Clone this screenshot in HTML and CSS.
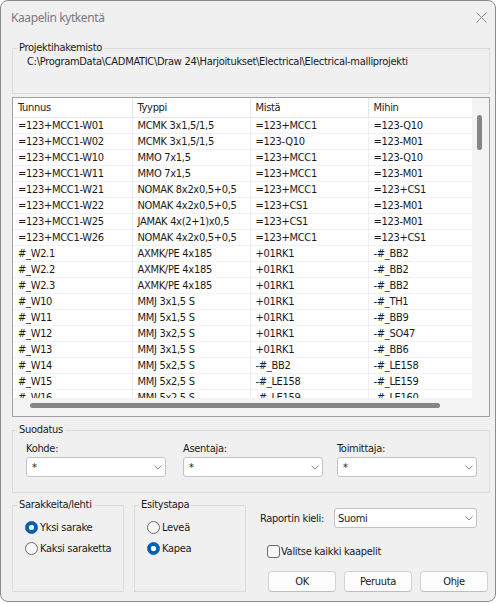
FILE: index.html
```html
<!DOCTYPE html>
<html>

<head>
  <title>Kaapelin kytkentä</title>
  <link rel="stylesheet" href="styles.css">
</head>

<body>
  <div class="window">
    <div class="titlebar">
      <span class="title">Kaapelin kytkentä</span>
      <svg class="close" width="11" height="11" viewBox="0 0 11 11">
        <path d="M0.5 0.5 L10.5 10.5 M10.5 0.5 L0.5 10.5" stroke="#8a8a8a" stroke-width="1" fill="none" />
      </svg>
    </div>

    <div class="content">
      <fieldset class="group project">
        <legend>Projektihakemisto</legend>
        <div class="path">C:\ProgramData\CADMATIC\Draw 24\Harjoitukset\Electrical\Electrical-malliprojekti</div>
      </fieldset>

      <div class="list">
        <div class="list-view">
          <table>
            <colgroup>
              <col class="c1"><col class="c2"><col class="c2"><col class="c2">
            </colgroup>
            <thead>
              <tr><th>Tunnus</th><th>Tyyppi</th><th>Mistä</th><th>Mihin</th></tr>
            </thead>
            <tbody>
              <tr><td>=123+MCC1-W01</td><td>MCMK 3x1,5/1,5</td><td>=123+MCC1</td><td>=123-Q10</td></tr>
              <tr><td>=123+MCC1-W02</td><td>MCMK 3x1,5/1,5</td><td>=123-Q10</td><td>=123-M01</td></tr>
              <tr><td>=123+MCC1-W10</td><td>MMO 7x1,5</td><td>=123+MCC1</td><td>=123-Q10</td></tr>
              <tr><td>=123+MCC1-W11</td><td>MMO 7x1,5</td><td>=123+MCC1</td><td>=123-M01</td></tr>
              <tr><td>=123+MCC1-W21</td><td>NOMAK 8x2x0,5+0,5</td><td>=123+MCC1</td><td>=123+CS1</td></tr>
              <tr><td>=123+MCC1-W22</td><td>NOMAK 4x2x0,5+0,5</td><td>=123+CS1</td><td>=123-M01</td></tr>
              <tr><td>=123+MCC1-W25</td><td>JAMAK 4x(2+1)x0,5</td><td>=123+CS1</td><td>=123-M01</td></tr>
              <tr><td>=123+MCC1-W26</td><td>NOMAK 4x2x0,5+0,5</td><td>=123+MCC1</td><td>=123+CS1</td></tr>
              <tr><td>#_W2.1</td><td>AXMK/PE 4x185</td><td>+01RK1</td><td>-#_BB2</td></tr>
              <tr><td>#_W2.2</td><td>AXMK/PE 4x185</td><td>+01RK1</td><td>-#_BB2</td></tr>
              <tr><td>#_W2.3</td><td>AXMK/PE 4x185</td><td>+01RK1</td><td>-#_BB2</td></tr>
              <tr><td>#_W10</td><td>MMJ 3x1,5 S</td><td>+01RK1</td><td>-#_TH1</td></tr>
              <tr><td>#_W11</td><td>MMJ 5x1,5 S</td><td>+01RK1</td><td>-#_BB9</td></tr>
              <tr><td>#_W12</td><td>MMJ 3x2,5 S</td><td>+01RK1</td><td>-#_SO47</td></tr>
              <tr><td>#_W13</td><td>MMJ 3x1,5 S</td><td>+01RK1</td><td>-#_BB6</td></tr>
              <tr><td>#_W14</td><td>MMJ 5x2,5 S</td><td>-#_BB2</td><td>-#_LE158</td></tr>
              <tr><td>#_W15</td><td>MMJ 5x2,5 S</td><td>-#_LE158</td><td>-#_LE159</td></tr>
              <tr><td>#_W16</td><td>MMJ 5x2,5 S</td><td>-#_LE159</td><td>-#_LE160</td></tr>
            </tbody>
          </table>
        </div>
        <div class="vscroll"><div class="thumb"></div></div>
        <div class="hscroll"><div class="thumb"></div></div>
        <div class="corner"></div>
      </div>

      <fieldset class="group filter">
        <legend>Suodatus</legend>
        <div class="filter-row">
          <div class="field">
            <label>Kohde:</label>
            <div class="combo"><span>*</span><svg class="chev" width="8" height="5" viewBox="0 0 8 5"><path d="M0.5 0.5 L4 4 L7.5 0.5" stroke="#8a8a8a" fill="none" /></svg></div>
          </div>
          <div class="field">
            <label>Asentaja:</label>
            <div class="combo"><span>*</span><svg class="chev" width="8" height="5" viewBox="0 0 8 5"><path d="M0.5 0.5 L4 4 L7.5 0.5" stroke="#8a8a8a" fill="none" /></svg></div>
          </div>
          <div class="field">
            <label>Toimittaja:</label>
            <div class="combo"><span>*</span><svg class="chev" width="8" height="5" viewBox="0 0 8 5"><path d="M0.5 0.5 L4 4 L7.5 0.5" stroke="#8a8a8a" fill="none" /></svg></div>
          </div>
        </div>
      </fieldset>

      <div class="bottom">
        <fieldset class="group small">
          <legend>Sarakkeita/lehti</legend>
          <label class="radio checked"><span class="dot"></span>Yksi sarake</label>
          <label class="radio"><span class="dot"></span>Kaksi saraketta</label>
        </fieldset>
        <fieldset class="group small second">
          <legend>Esitystapa</legend>
          <label class="radio"><span class="dot"></span>Leveä</label>
          <label class="radio checked"><span class="dot"></span>Kapea</label>
        </fieldset>

        <div class="options">
          <div class="lang">
            <span class="lang-label">Raportin kieli:</span>
            <div class="combo wide"><span>Suomi</span><svg class="chev" width="8" height="5" viewBox="0 0 8 5"><path d="M0.5 0.5 L4 4 L7.5 0.5" stroke="#8a8a8a" fill="none" /></svg></div>
          </div>
          <label class="check"><span class="box"></span>Valitse kaikki kaapelit</label>
          <div class="buttons">
            <button>OK</button>
            <button>Peruuta</button>
            <button>Ohje</button>
          </div>
        </div>
      </div>
    </div>
  </div>
</body>

</html>
```

FILE: styles.css
```css
body {
  margin: 0;
  background: #ffffff;
  font-family: "DejaVu Sans Condensed", Tahoma, "DejaVu Sans", sans-serif;
  font-size: 11px;
  letter-spacing: -0.3px;
  color: #1a1a1a;
}

.window {
  width: 496px;
  height: 602px;
  box-sizing: border-box;
  border: 1px solid #8c8c8c;
  border-radius: 8px;
  background: #f0f0f0;
  overflow: hidden;
}

.titlebar {
  height: 32px;
  display: flex;
  align-items: center;
  justify-content: space-between;
  padding: 0 8px 0 10px;
}

.title {
  font-family: "Noto Sans", "Open Sans", sans-serif;
  font-size: 12px;
  letter-spacing: -0.4px;
  color: #7a7a7a;
}

.content {
  padding: 0 5px 0 11px;
}

/* group boxes */
fieldset.group {
  margin: 0;
  padding: 0 4px;
  border: 1px solid #dcdcdc;
  min-width: 0;
}

legend {
  padding: 0 2px;
  line-height: 14px;
}

.project {
  margin-top: 8px !important;
  padding-bottom: 24px !important;
}

.path {
  margin-left: 10px;
  line-height: 14px;
}

/* list view */
.list {
  margin-top: 3px;
  border: 1px solid #a0a0a0;
  display: grid;
  grid-template-columns: 459px 17px;
  grid-template-rows: 300px 18px;
}

.list-view {
  background: #fff;
  overflow: hidden;
}

table {
  table-layout: fixed;
  width: 473px;
  border-collapse: collapse;
}

col.c1 {
  width: 119px;
}

col.c2 {
  width: 118px;
}

th,
td {
  padding: 0 4px 0 5px;
  text-align: left;
  font-weight: normal;
  white-space: nowrap;
  overflow: hidden;
  border-right: 1px solid #efefef;
}

th {
  height: 18px;
  line-height: 18px;
  padding-top: 1px;
  color: #222;
  border-bottom: 1px solid #e8e8e8;
  border-right-color: #e5e5e5;
}

td {
  height: 15px;
  line-height: 15px;
  border-bottom: 1px solid #f2f2f2;
}

.vscroll,
.hscroll,
.corner {
  background: #f3f3f3;
}

.vscroll {
  padding: 17px 0 0 5px;
}

.vscroll .thumb {
  width: 5px;
  height: 35px;
  border-radius: 3px;
  background: #858585;
}

.hscroll {
  padding: 5px 0 0 17px;
}

.hscroll .thumb {
  width: 410px;
  height: 5px;
  border-radius: 3px;
  background: #858585;
}

/* filter */
.filter {
  margin-top: 6px !important;
  padding: 5px 4px 15px !important;
}

.filter-row {
  margin-left: 9px;
  display: grid;
  grid-template-columns: 157px 154px 140px;
}

.field label {
  display: block;
  line-height: 14px;
  margin-bottom: 1px;
}

.combo {
  width: 140px;
  height: 20px;
  box-sizing: border-box;
  border: 1px solid #c2c2c2;
  border-radius: 3px;
  background: #fff;
  display: flex;
  align-items: center;
  justify-content: space-between;
  padding: 0 3px 0 5px;
}

.combo.wide {
  width: 143px;
  padding-left: 3px;
}

/* bottom part */
.bottom {
  display: flex;
  margin-top: 5px;
}

.small {
  width: 112px;
  box-sizing: border-box;
  padding: 5px 4px 3px !important;
}

.small.second {
  margin-left: 10px !important;
}

.radio {
  display: flex;
  align-items: center;
  height: 21px;
  margin-left: 8px;
  white-space: nowrap;
}

.dot {
  flex: none;
  width: 13px;
  height: 13px;
  box-sizing: border-box;
  border: 1px solid #6b6b6b;
  border-radius: 50%;
  background: #f8f8f8;
  margin-right: 2px;
}

.radio.checked .dot {
  border-color: #005fb8;
  background: radial-gradient(circle, #fff 0 2.5px, #005fb8 3px);
}

.options {
  margin-left: 14px;
  padding-top: 10px;
}

.lang {
  display: flex;
  align-items: center;
}

.lang-label {
  width: 74px;
  white-space: nowrap;
}

.check {
  display: flex;
  align-items: center;
  margin: 17px 0 0 7px;
  height: 13px;
}

.box {
  width: 13px;
  height: 13px;
  box-sizing: border-box;
  border: 1px solid #6b6b6b;
  border-radius: 3px;
  background: #f8f8f8;
  margin-right: 1px;
}

.buttons {
  display: flex;
  gap: 8px;
  margin: 13px 0 0 8px;
}

button {
  width: 68px;
  height: 21px;
  border: 1px solid #d3d3d3;
  border-bottom-color: #bdbdbd;
  border-radius: 4px;
  background: #fdfdfd;
  font-family: "DejaVu Sans Condensed", Tahoma, sans-serif;
  font-size: 11px;
  letter-spacing: -0.3px;
  color: #1a1a1a;
  padding: 0;
}
```
